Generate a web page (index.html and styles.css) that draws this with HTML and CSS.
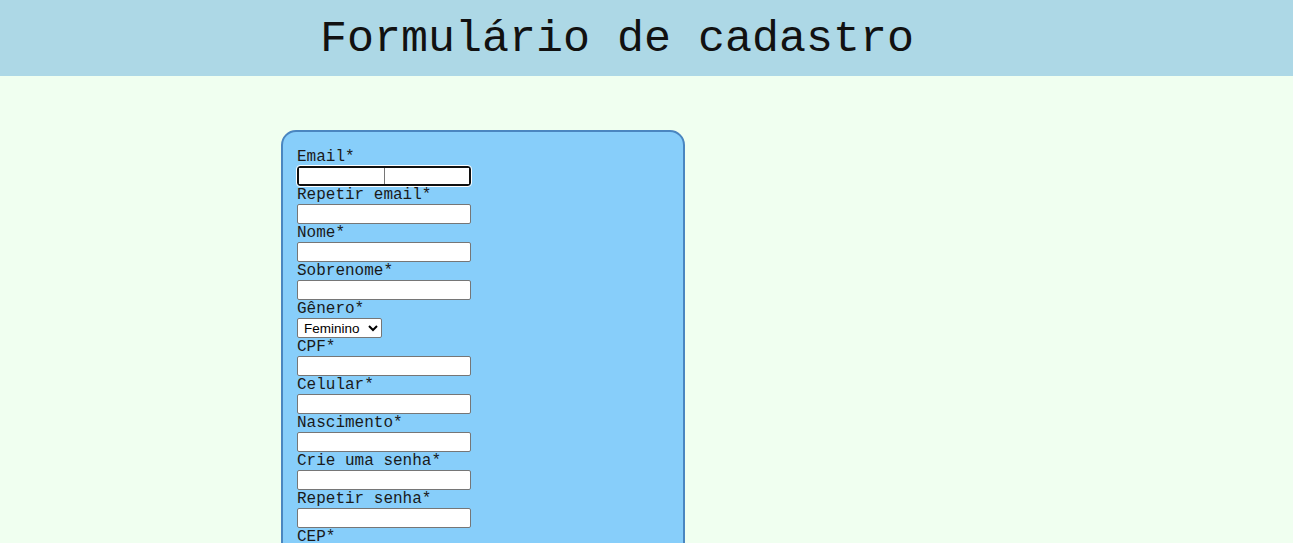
FILE: index.html
```html
<!DOCTYPE html>
<html lang="pt-BR">
<head>
<meta charset="utf-8">
<title>Formulário de cadastro</title>
<link rel="stylesheet" href="styles.css">
</head>
<body>
<header class="topo">
  <h1 class="titulo">Formulário de cadastro</h1>
</header>
<main class="conteudo">
  <form class="cartao">
    <label class="rotulo" for="email">Email*</label>
    <div class="campo-duplo">
      <input class="metade" id="email" type="text">
      <input class="metade" type="text">
    </div>
    <label class="rotulo" for="email2">Repetir email*</label>
    <input class="campo" id="email2" type="text">
    <label class="rotulo" for="nome">Nome*</label>
    <input class="campo" id="nome" type="text">
    <label class="rotulo" for="sobrenome">Sobrenome*</label>
    <input class="campo" id="sobrenome" type="text">
    <label class="rotulo" for="genero">Gênero*</label>
    <select class="selecao" id="genero">
      <option>Feminino</option>
      <option>Masculino</option>
    </select>
    <label class="rotulo" for="cpf">CPF*</label>
    <input class="campo" id="cpf" type="text">
    <label class="rotulo" for="celular">Celular*</label>
    <input class="campo" id="celular" type="text">
    <label class="rotulo" for="nascimento">Nascimento*</label>
    <input class="campo" id="nascimento" type="text">
    <label class="rotulo" for="senha">Crie uma senha*</label>
    <input class="campo" id="senha" type="password">
    <label class="rotulo" for="senha2">Repetir senha*</label>
    <input class="campo" id="senha2" type="password">
    <label class="rotulo" for="cep">CEP*</label>
    <input class="campo" id="cep" type="text">
    <label class="rotulo" for="endereco">Endereço*</label>
    <input class="campo" id="endereco" type="text">
  </form>
</main>
</body>
</html>
```
FILE: styles.css
```css
html, body {
  margin: 0;
  padding: 0;
}
body {
  background: #f0fff0;
  font-family: "Liberation Mono", "Courier New", monospace;
  color: #000;
}
.topo {
  background: #add8e6;
  height: 76px;
  display: flex;
  align-items: center;
  padding-left: 320px;
}
.titulo {
  margin: 0;
  font-family: "Liberation Mono", "Courier New", monospace;
  font-weight: normal;
  font-size: 45px;
  line-height: 52px;
  position: relative;
  top: 2px;
  color: #111;
}
.conteudo {
  padding: 54px 0 0 281px;
}
.cartao {
  width: 370px;
  background: #87cefa;
  border: 2px solid #4a86c0;
  border-radius: 15px;
  padding: 16px 16px 30px 14px;
  display: flex;
  flex-direction: column;
  align-items: flex-start;
}
.rotulo {
  font-size: 16px;
  line-height: 18px;
  height: 18px;
  display: block;
  color: #1a1a1a;
}
.campo {
  box-sizing: border-box;
  width: 174px;
  height: 20px;
  margin: 0;
  border: 1px solid #767676;
  border-radius: 2px;
  background: #fff;
  padding: 1px 2px;
  font-size: 13px;
}
.campo-duplo {
  box-sizing: border-box;
  width: 174px;
  height: 20px;
  display: flex;
  border: 2px solid #101010;
  border-radius: 3px;
  background: #fff;
  outline: 1px solid #fff;
}
.metade {
  box-sizing: border-box;
  flex: 1;
  min-width: 0;
  height: 16px;
  margin: 0;
  border: none;
  padding: 0 2px;
  background: #fff;
}
.metade + .metade {
  border-left: 1px solid #767676;
}
.selecao {
  box-sizing: border-box;
  width: 85px;
  height: 20px;
  margin: 0;
  padding: 0 0 0 2px;
  font-family: "Liberation Sans", Arial, sans-serif;
  font-size: 13.5px;
  border: 1px solid #767676;
  border-radius: 2px;
  background: #fff;
  color: #000;
}
```
